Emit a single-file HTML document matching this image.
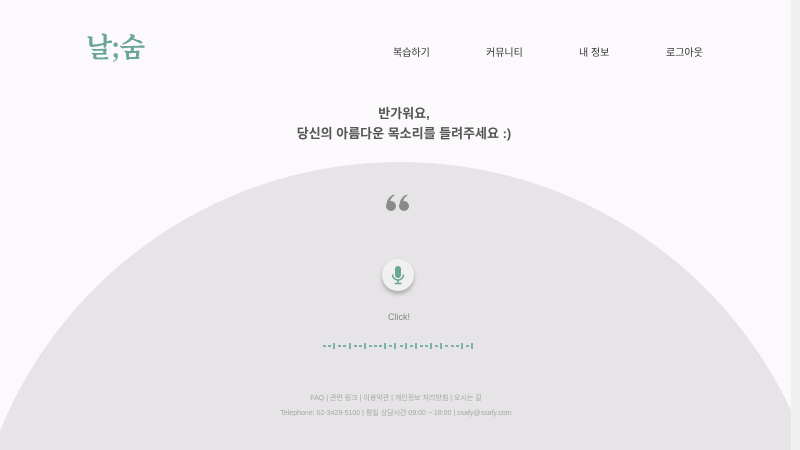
<!DOCTYPE html>
<html style="width:800px;height:450px;overflow:hidden"><head><meta charset="utf-8"><style>
body{margin:0;width:800px;height:450px;overflow:hidden;background:#fcf9fc;font-family:"Liberation Sans","Noto Sans CJK KR",sans-serif;position:relative}
.circle{position:absolute;left:-32px;top:162px;width:864px;height:864px;border-radius:50%;background:#e6e4e6}
.logo{position:absolute;left:86px;top:26px;font-size:27px;font-weight:bold;color:#6aa596;letter-spacing:-1px;font-family:"Noto Serif CJK SC",serif}
.nav{position:absolute;top:44px;font-size:10px;color:#333}
.title{position:absolute;left:4px;width:800px;top:104px;text-align:center;font-size:13px;font-weight:bold;color:#555;line-height:20px}
.quote{position:absolute;left:385px;top:194px}
.mic{position:absolute;left:382px;top:259px;width:32px;height:32px;border-radius:50%;background:#f1f0f1;box-shadow:0 3px 4px rgba(0,0,0,.25)}
.click{position:absolute;left:0;width:798px;top:312px;text-align:center;font-size:9px;color:#888}
.wave{position:absolute;left:323px;top:343px;height:6px;width:160px}
.wave span{position:absolute;background:#7bb3a5}
.f1{position:absolute;left:0;width:792px;top:393px;text-align:center;font-size:7px;color:#a6a6a6}
.f2{position:absolute;left:0;width:792px;top:408px;text-align:center;font-size:7px;color:#a6a6a6}
.sb{position:absolute;right:0;top:0;width:9px;height:450px;background:#f0f0f0}
</style></head><body>
<div class="circle"></div>
<div class="logo">날;숨</div>
<div class="nav" style="left:393px">복습하기</div>
<div class="nav" style="left:486px">커뮤니티</div>
<div class="nav" style="left:579px">내 정보</div>
<div class="nav" style="left:666px">로그아웃</div>
<div class="title">반가워요,<br>당신의 아름다운 목소리를 들려주세요 :)</div>
<svg class="quote" width="26" height="18" viewBox="0 0 26 18"><g fill="#8a8a8a"><circle cx="6" cy="12" r="5"/><path d="M1.5 11C2 5 5 2 9 0.5L9.5 1.5C6.5 3 5 6 5 9Z"/><circle cx="19" cy="12" r="5"/><path d="M14.5 11C15 5 18 2 22 0.5L22.5 1.5C19.5 3 18 6 18 9Z"/></g></svg>
<div class="mic"><svg width="32" height="32" viewBox="0 0 32 32"><rect x="13" y="7" width="6" height="12" rx="3" fill="#6aa596"/><path d="M10.5 15.5a5.5 5.5 0 0 0 11 0" stroke="#6aa596" stroke-width="1.5" fill="none"/><path d="M16 21v3M12.5 24.5h7" stroke="#6aa596" stroke-width="1.5"/></svg></div>
<div class="click">Click!</div>
<div class="wave" id="w"></div>
<div class="f1">FAQ | 관련 링크 | 이용약관 | 개인정보 처리방침 | 오시는 길</div>
<div class="f2">Telephone: 02-3429-5100 | 평일 상담시간 09:00 ~ 18:00 | ssafy@ssafy.com</div>
<div class="sb"></div>
<script>
var p="ddbddbddbdddbdbdbdbddbdbdddbdb",w=document.getElementById('w'),h='';
for(var i=0;i<p.length;i++){var x=i*5.1;h+=p[i]=='b'?'<span style="left:'+x+'px;top:0;width:2px;height:6px"></span>':'<span style="left:'+x+'px;top:2px;width:3px;height:2px"></span>';}
w.innerHTML=h;
</script>
</body></html>
